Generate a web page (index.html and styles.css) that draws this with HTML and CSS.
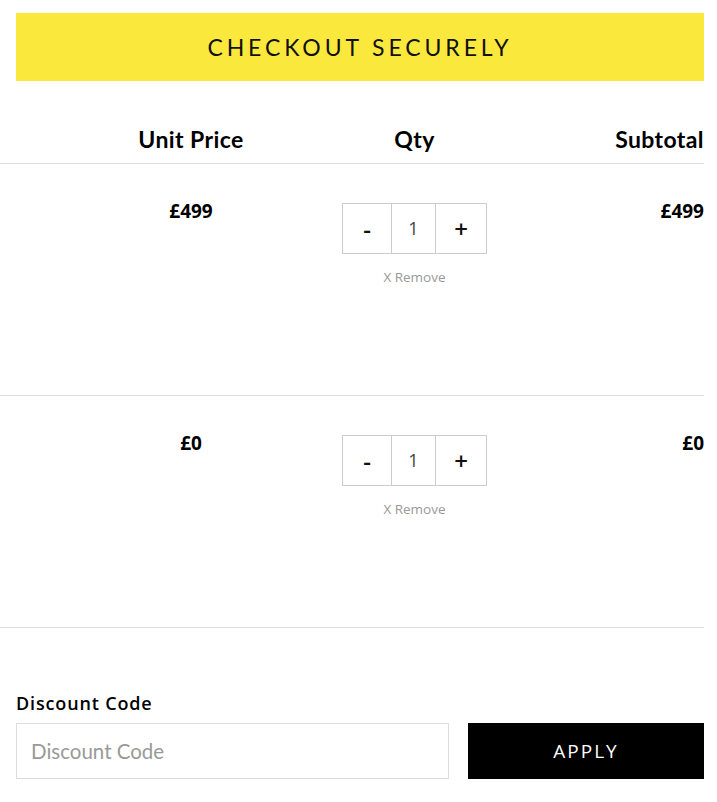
FILE: index.html
```html
<!DOCTYPE html>
<html lang="en">
<head>
  <meta charset="UTF-8">
  <title>Cart</title>
  <link rel="stylesheet" href="styles.css">
</head>
<body>

  <div class="page">
    <button class="checkout-btn">CHECKOUT SECURELY</button>

    <div class="cart-head">
      <div class="col-price">Unit Price</div>
      <div class="col-qty">Qty</div>
      <div class="col-subtotal">Subtotal</div>
    </div>

    <div class="cart-row">
      <div class="col-price price">£499</div>
      <div class="col-qty">
        <div class="qty-box">
          <button class="qty-btn minus">-</button>
          <span class="qty-value">1</span>
          <button class="qty-btn plus">+</button>
        </div>
        <a class="remove" href="#">X Remove</a>
      </div>
      <div class="col-subtotal price">£499</div>
    </div>

    <div class="cart-row">
      <div class="col-price price">£0</div>
      <div class="col-qty">
        <div class="qty-box">
          <button class="qty-btn minus">-</button>
          <span class="qty-value">1</span>
          <button class="qty-btn plus">+</button>
        </div>
        <a class="remove" href="#">X Remove</a>
      </div>
      <div class="col-subtotal price">£0</div>
    </div>

    <div class="discount">
      <label for="discount-code">Discount Code</label>
      <div class="discount-group">
        <input type="text" id="discount-code" placeholder="Discount Code">
        <button class="apply-btn">APPLY</button>
      </div>
    </div>
  </div>

</body>
</html>
```

FILE: styles.css
```css
body {
  margin: 0;
  font-family: Lato, "Open Sans", sans-serif;
  color: #000;
  background-color: #fff;
}

.page {
  width: 704px;
  overflow: hidden;
}

.checkout-btn {
  display: block;
  width: 688px;
  height: 68px;
  margin: 13px 0 0 16px;
  border: none;
  background-color: #fae93c;
  color: #111;
  font-family: Lato, sans-serif;
  font-size: 23px;
  letter-spacing: 3.9px;
  cursor: pointer;
}

.cart-head,
.cart-row {
  display: grid;
  grid-template-columns: 302px 145px 1fr;
  padding-left: 40px;
  border-bottom: 1px solid #ddd;
}

.cart-head {
  margin-top: 43px;
  padding-bottom: 9px;
  font-size: 23px;
  font-weight: 700;
  line-height: 30px;
  letter-spacing: 0.4px;
}

.col-price,
.col-qty {
  text-align: center;
}

.col-subtotal {
  text-align: right;
}

.cart-row {
  box-sizing: border-box;
  height: 232px;
  padding-top: 38px;
  align-items: start;
}

.price {
  font-family: "Open Sans", sans-serif;
  font-size: 19px;
  font-weight: 700;
  line-height: 19px;
}

.qty-box {
  display: flex;
  height: 51px;
  margin-top: 1px;
  box-sizing: border-box;
  border: 1px solid #ccc;
}

.qty-btn {
  border: none;
  background: none;
  padding: 0;
  font-family: "Open Sans", sans-serif;
  font-size: 24px;
  font-weight: 600;
  color: #111;
  cursor: pointer;
}

.qty-btn.minus {
  width: 49px;
  border-right: 1px solid #ccc;
}

.qty-btn.plus {
  width: 51px;
  border-left: 1px solid #ccc;
}

.qty-value {
  flex: 1;
  line-height: 49px;
  font-family: "Open Sans", sans-serif;
  font-size: 18px;
  color: #444;
}

.remove {
  display: block;
  margin-top: 14px;
  font-family: "Open Sans", sans-serif;
  font-size: 13.5px;
  line-height: 18px;
  color: #999;
  text-decoration: none;
}

.discount {
  margin: 63px 0 0 16px;
}

.discount label {
  display: block;
  font-family: "Open Sans", sans-serif;
  font-size: 18px;
  font-weight: 600;
  line-height: 24px;
  letter-spacing: 0.85px;
  margin-bottom: 8px;
}

.discount-group {
  display: flex;
  gap: 19px;
}

.discount-group input {
  box-sizing: border-box;
  width: 433px;
  height: 56px;
  padding: 0 14px;
  border: 1px solid #ddd;
  font-family: Lato, sans-serif;
  font-size: 20.5px;
  color: #333;
}

.discount-group input::placeholder {
  color: #999;
}

.apply-btn {
  flex: 1;
  height: 56px;
  border: none;
  background-color: #000;
  color: #fff;
  font-family: "Open Sans", sans-serif;
  font-size: 19px;
  letter-spacing: 2px;
  cursor: pointer;
}
```
